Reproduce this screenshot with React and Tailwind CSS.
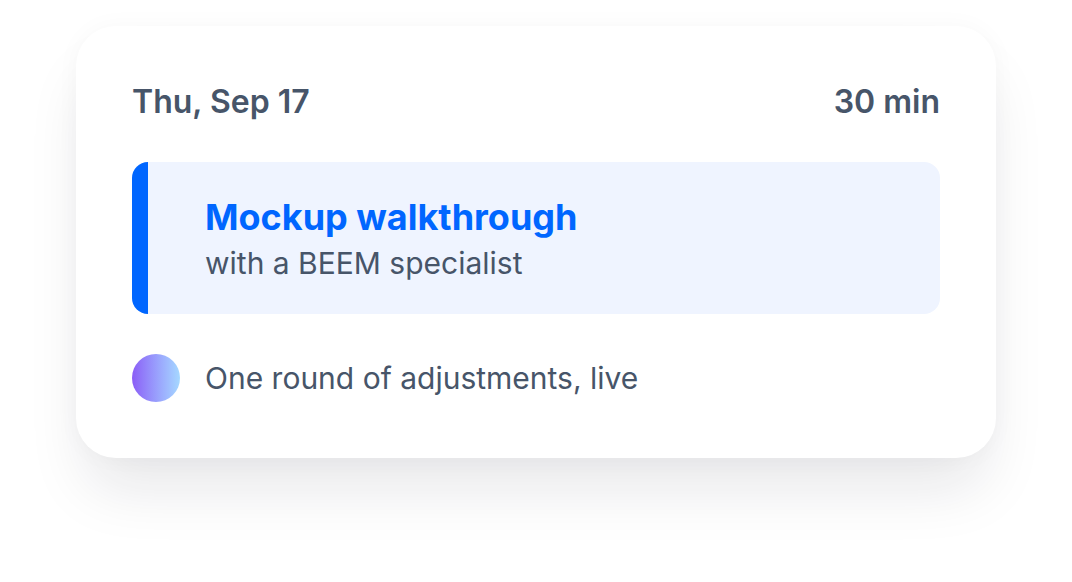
import React from 'react';

export default function App() {
  return (
    <div className="w-[1072px] h-[582px] bg-white overflow-hidden" style={{ fontFamily: 'Inter, "Noto Sans", sans-serif' }}>
      <div className="pt-[26px] pl-[76px]">
        <div className="w-[920px] h-[432px] bg-white rounded-[40px] shadow-[0_40px_60px_-10px_rgba(15,23,42,0.10),0_0_24px_rgba(15,23,42,0.03)] px-[56px] pt-[56px]">
          {/* Header */}
          <div className="flex items-center justify-between text-[#475569] text-[32px] font-semibold leading-[40px]">
            <span>Thu, Sep 17</span>
            <span>30 min</span>
          </div>

          {/* Event */}
          <div className="mt-[40px] h-[152px] flex rounded-[16px] bg-[#eff4ff] overflow-hidden">
            <div className="w-[16px] bg-[#0066ff] shrink-0" />
            <div className="pl-[57px] pt-[33px]">
              <p className="text-[#0066ff] text-[36px] font-bold leading-[44px]">Mockup walkthrough</p>
              <p className="text-[#475569] text-[30px] leading-[36px] mt-[6px]">with a BEEM specialist</p>
            </div>
          </div>

          {/* Note */}
          <div className="mt-[40px] flex items-center gap-[25px]">
            <div className="w-[48px] h-[48px] rounded-full bg-gradient-to-r from-[#8b5cf6] to-[#a5d8ff] shrink-0" />
            <span className="text-[#475569] text-[30px] leading-[36px]">One round of adjustments, live</span>
          </div>
        </div>
      </div>
    </div>
  );
}
